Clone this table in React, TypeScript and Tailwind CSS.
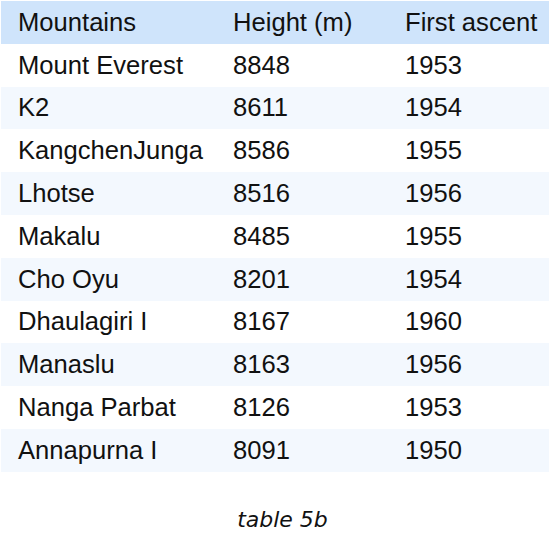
import React from "react";

const rows: [string, string, string][] = [
  ["Mount Everest", "8848", "1953"],
  ["K2", "8611", "1954"],
  ["KangchenJunga", "8586", "1955"],
  ["Lhotse", "8516", "1956"],
  ["Makalu", "8485", "1955"],
  ["Cho Oyu", "8201", "1954"],
  ["Dhaulagiri I", "8167", "1960"],
  ["Manaslu", "8163", "1956"],
  ["Nanga Parbat", "8126", "1953"],
  ["Annapurna I", "8091", "1950"],
];

export default function App() {
  return (
    <div className="w-[549px] h-[538px] overflow-hidden bg-white">
      <div className="pt-px pl-px w-[565px]">
        <table
          className="table-fixed border-collapse w-[563px] text-[#111]"
          style={{ fontFamily: '"Liberation Sans", Arial, sans-serif' }}
        >
          <colgroup>
            <col className="w-[215px]" />
            <col className="w-[172px]" />
            <col className="w-[176px]" />
          </colgroup>
          <thead>
            <tr className="bg-[#cfe4fb] h-[42.8px]">
              <th className="text-left font-normal text-[25.6px] leading-[29px] px-[17px] py-0 align-middle">Mountains</th>
              <th className="text-left font-normal text-[25.6px] leading-[29px] px-[17px] py-0 align-middle">Height (m)</th>
              <th className="text-left font-normal text-[25.6px] leading-[29px] px-[17px] py-0 align-middle whitespace-nowrap">First ascent</th>
            </tr>
          </thead>
          <tbody>
            {rows.map((r, i) => (
              <tr key={r[0]} className={i % 2 === 0 ? "bg-white h-[42.8px]" : "bg-[#f3f8fe] h-[42.8px]"}>
                <td className="text-[25.6px] leading-[29px] px-[17px] py-0 align-middle whitespace-nowrap">{r[0]}</td>
                <td className="text-[25.6px] leading-[29px] px-[17px] py-0 align-middle">{r[1]}</td>
                <td className="text-[25.6px] leading-[29px] px-[17px] py-0 align-middle">{r[2]}</td>
              </tr>
            ))}
          </tbody>
        </table>
        <div
          className="w-[563px] text-center italic text-[22px] leading-[24px] mt-[36px] text-[#111]"
          style={{ fontFamily: '"DejaVu Sans", Verdana, sans-serif' }}
        >
          table 5b
        </div>
      </div>
    </div>
  );
}
